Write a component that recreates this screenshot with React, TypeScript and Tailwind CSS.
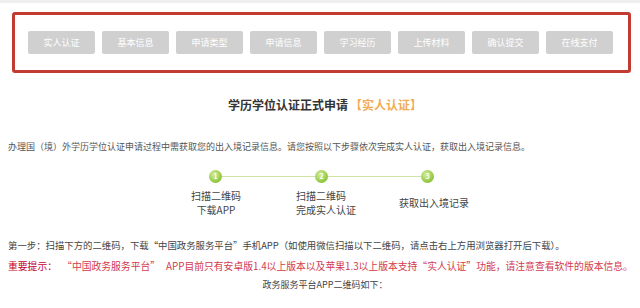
export default function App() {
  const tabs = ["实人认证", "基本信息", "申请类型", "申请信息", "学习经历", "上传材料", "确认提交", "在线支付"];

  const steps = [
    { n: "1", lines: ["扫描二维码", "下载APP"] },
    { n: "2", lines: ["扫描二维码", "完成实人认证"] },
    { n: "3", lines: ["获取出入境记录"] },
  ];

  return (
    <div className="w-[640px] h-[308px] overflow-hidden bg-white font-['Noto_Sans_CJK_SC',sans-serif] text-[#555]">
      <div className="h-[3px] bg-[#efefef]" />

      {/* Step tabs */}
      <div className="ml-[12px] mt-[9px] w-[619px] h-[61px] border-[3px] border-[#c23b32] rounded-[3px] flex items-center pl-[13px] gap-[7px]">
        {tabs.map((t) => (
          <div
            key={t}
            className="w-[67px] h-[23px] rounded-[2px] bg-[#d0d0d0] flex items-center justify-center text-[9px] text-white"
          >
            {t}
          </div>
        ))}
      </div>

      {/* Title */}
      <div className="mt-[24px] flex justify-center pl-[10px] text-[12px] leading-[16px] font-bold">
        <span className="text-[#333]">学历学位认证正式申请</span>
        <span className="ml-[2px] text-[#f2ac55]">【实人认证】</span>
      </div>

      <p className="mt-[28px] ml-[8px] text-[9px] leading-[12px]">
        办理国（境）外学历学位认证申请过程中需获取您的出入境记录信息。请您按照以下步骤依次完成实人认证，获取出入境记录信息。
      </p>

      {/* Progress */}
      <div className="mt-[17px] ml-[209px] flex items-center">
        {steps.map((s, i) => (
          <div key={s.n} className="flex items-center">
            <div className="w-[13px] h-[13px] rounded-full bg-[radial-gradient(circle_at_40%_35%,#d6ee9a,#8cc43c_70%)] flex items-center justify-center text-[7px] leading-none text-white font-bold">
              {s.n}
            </div>
            {i < steps.length - 1 && <div className="w-[93px] h-px bg-[#cfe3a6]" />}
          </div>
        ))}
      </div>
      <div className="mt-[6px] ml-[163px] w-[318px] grid grid-cols-3 items-center text-[10px] leading-[14px] text-[#444]">
        {steps.map((s, i) => (
          <div key={s.n} className="flex justify-center">
            <div className={i === 1 ? "text-left ml-[8px]" : i === 2 ? "text-center ml-[12px]" : "text-center"}>
              {s.lines.map((l) => (
                <div key={l}>{l}</div>
              ))}
            </div>
          </div>
        ))}
      </div>

      <p className="mt-[21px] ml-[8px] text-[9.4px] leading-[14px] text-[#444]">
        第一步：扫描下方的二维码，下载“中国政务服务平台”手机APP（如使用微信扫描以下二维码，请点击右上方用浏览器打开后下载）。
      </p>
      <p className="mt-[7px] ml-[8px] text-[9.8px] leading-[14px] text-[#d23a4c] whitespace-nowrap">
        <span className="text-[#c4001f]">重要提示：</span>
        <span className="ml-[10px]">“中国政务服务平台”</span>
        <span className="ml-[6px]">APP目前只有安卓版1.4以上版本以及苹果1.3以上版本支持“实人认证”功能，请注意查看软件的版本信息。</span>
      </p>
      <p className="mt-[5px] pl-[10px] text-center text-[9px] leading-[14px] text-[#444]">政务服务平台APP二维码如下：</p>
    </div>
  );
}
